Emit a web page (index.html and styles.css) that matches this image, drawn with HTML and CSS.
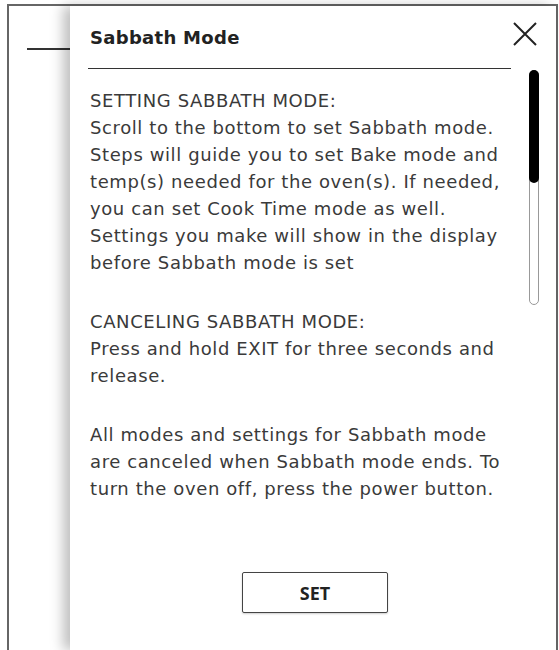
FILE: index.html
```html
<!DOCTYPE html>
<html lang="en">
<head>
    <meta charset="UTF-8">
    <meta name="viewport" content="width=device-width, initial-scale=1.0">
    <title>Sabbath Mode</title>
    <link rel="stylesheet" href="styles.css">
</head>
<body>
    <div class="frame">
        <div class="under">
            <div class="under-rule"></div>
        </div>

        <div class="panel">
            <div class="main">
                <div class="head">
                    <h1>Sabbath Mode</h1>
                </div>

                <div class="info">
                    <p>SETTING SABBATH MODE:<br>
                    Scroll to the bottom to set Sabbath mode.<br>
                    Steps will guide you to set Bake mode and<br>
                    temp(s) needed for the oven(s). If needed,<br>
                    you can set Cook Time mode as well.<br>
                    Settings you make will show in the display<br>
                    before Sabbath mode is set</p>

                    <p>CANCELING SABBATH MODE:<br>
                    Press and hold EXIT for three seconds and<br>
                    release.</p>

                    <p>All modes and settings for Sabbath mode<br>
                    are canceled when Sabbath mode ends. To<br>
                    turn the oven off, press the power button.</p>
                </div>

                <button class="set-btn">SET</button>
            </div>

            <div class="side">
                <button class="close-btn" aria-label="Close">
                    <svg width="26" height="26" viewBox="0 0 26 26">
                        <path d="M2 2 L24 24 M24 2 L2 24" stroke="#222" stroke-width="2" fill="none"/>
                    </svg>
                </button>
                <div class="track">
                    <div class="thumb"></div>
                </div>
            </div>
        </div>
    </div>
</body>
</html>
```

FILE: styles.css
```css
* {
    margin: 0;
    padding: 0;
    box-sizing: border-box;
}

body {
    font-family: 'DejaVu Sans', 'Open Sans', sans-serif;
    background: #ffffff;
    color: #333;
    height: 650px;
    overflow: hidden;
}

.frame {
    display: flex;
    width: 551px;
    height: 646px;
    margin: 4px 0 0 7px;
    border: 2px solid #666;
    border-bottom: none;
}

.under {
    width: 61px;
    flex-shrink: 0;
}

.under-rule {
    margin: 42px 0 0 18px;
    border-top: 2px solid #333;
}

.panel {
    flex: 1;
    display: flex;
    background: #fff;
    box-shadow: -7px 0 12px rgba(0, 0, 0, 0.25);
}

.main {
    width: 423px;
    margin-left: 18px;
}

.head {
    height: 63px;
    display: flex;
    align-items: center;
    padding-left: 2px;
    border-bottom: 1.5px solid #333;
}

h1 {
    font-size: 18px;
    font-weight: 700;
    color: #222;
    letter-spacing: 0.3px;
}

.info {
    padding: 18px 0 0 2px;
    font-size: 18px;
    line-height: 27px;
    letter-spacing: 0.6px;
    color: #3a3a3a;
    white-space: nowrap;
}

.info p {
    margin-bottom: 32px;
}

.set-btn {
    display: block;
    width: 146px;
    height: 41px;
    margin: 70px 0 0 154px;
    background: #fff;
    border: 1.5px solid #444;
    border-radius: 2px;
    font-family: 'Open Sans', 'Liberation Sans', sans-serif;
    font-size: 18px;
    font-weight: 700;
    color: #222;
    box-shadow: 0 1px 2px rgba(0, 0, 0, 0.2);
}

.side {
    width: 45px;
    display: flex;
    flex-direction: column;
}

.close-btn {
    background: none;
    border: none;
    width: 26px;
    height: 26px;
    margin: 15px 0 0 1px;
    cursor: pointer;
}

.close-btn svg {
    display: block;
}

.track {
    width: 10px;
    height: 235px;
    margin: 23px 0 0 18px;
    border: 1px solid #999;
    border-radius: 5px;
}

.thumb {
    height: 113px;
    margin: -1px -1px 0;
    background: #000;
    border-radius: 6px;
}
```
